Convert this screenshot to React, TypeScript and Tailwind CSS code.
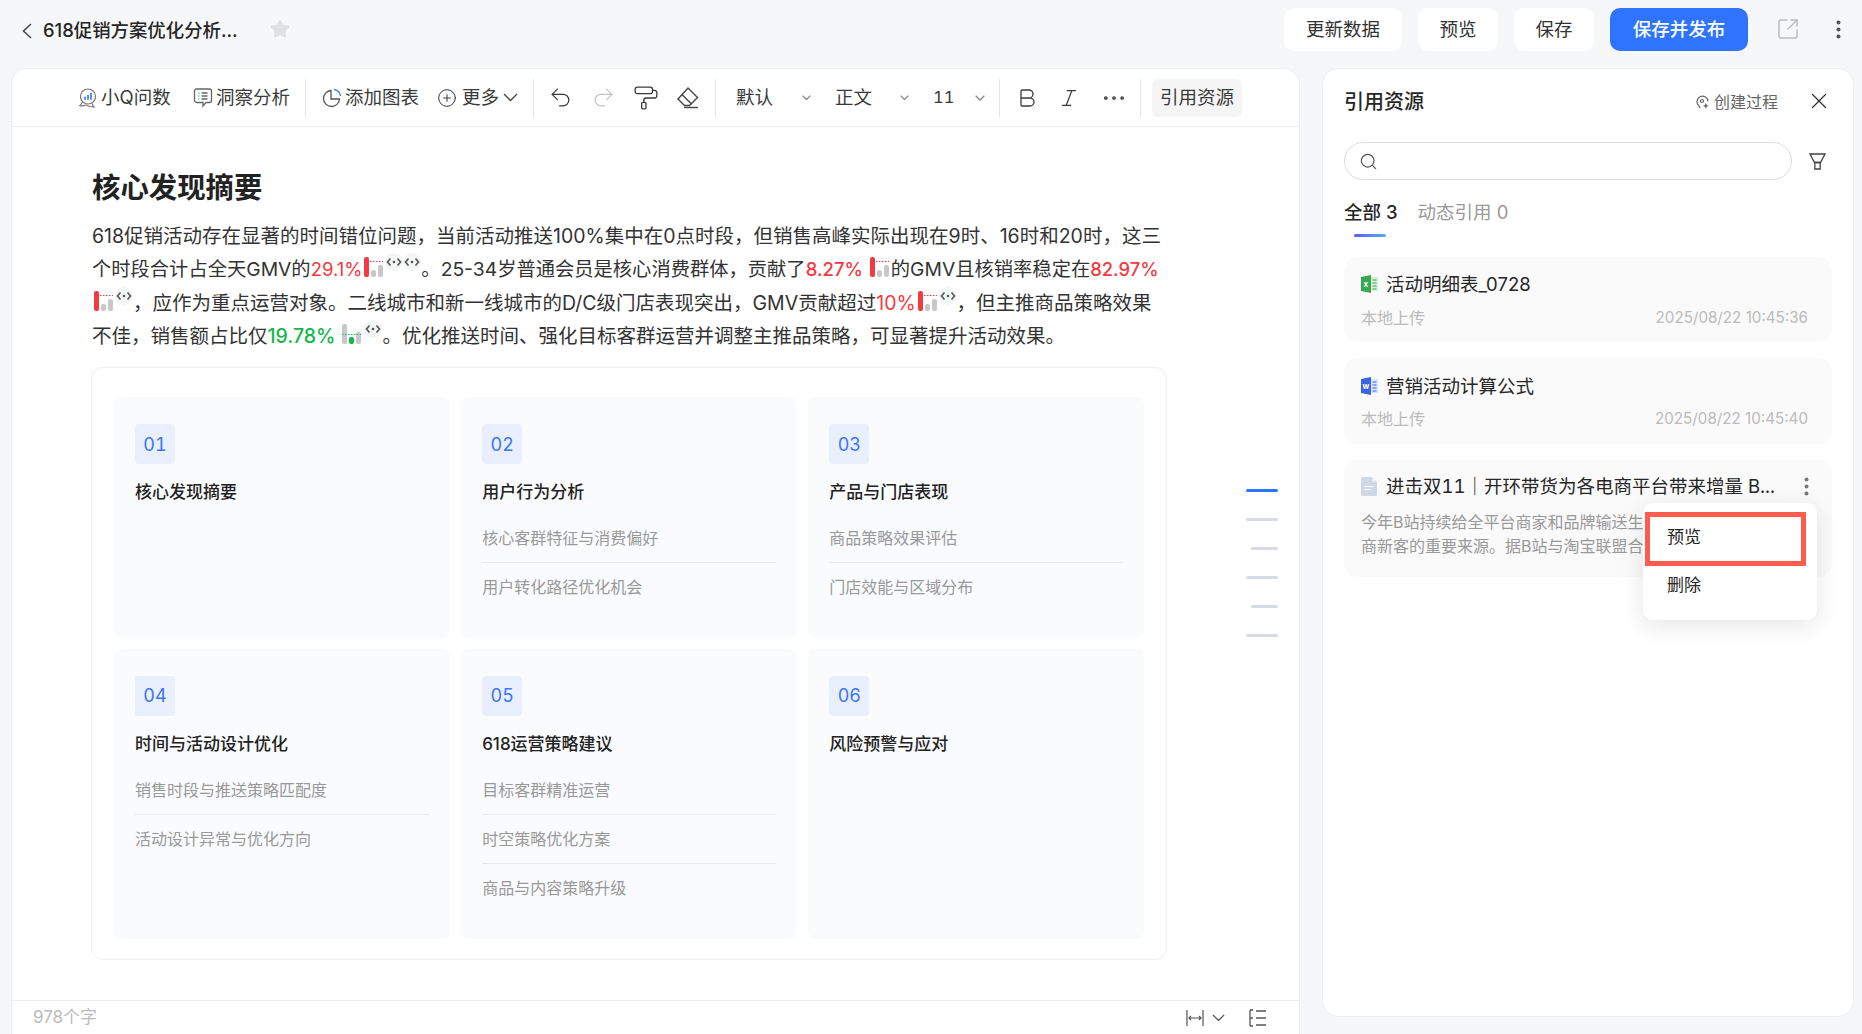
import { CirclePlus, ChevronDown, Star, Undo2, Redo2, PaintRoller, Bold, Italic, Ellipsis, Search, X, SquareArrowOutUpRight } from "lucide-react";

function Divider({ className }: { className: string }) {
  return <div className={`w-px h-[38px] shrink-0 bg-[#e4e6ea] ${className}`} />;
}

function Chev({ w, color, className }: { w: number; color: string; className: string }) {
  return (
    <svg width={w} height={w * 0.6} viewBox="0 0 15 9" fill="none" stroke={color} strokeWidth="1.300" className={`shrink-0 ${className}`}>
      <path d="M1 1l6.500 6.500L14 1" vectorEffect="non-scaling-stroke" />
    </svg>
  );
}

function QaIcon() {
  return (
    <svg width="20" height="22" viewBox="0 0 20 22" fill="none" stroke="#777" strokeWidth="1.200" className="shrink-0">
      <circle cx="10" cy="9.500" r="7.500" />
      <path d="M4 15c-.3 2 -1 3 -2 3.600 2 .6 4 .3 5.500-.8" />
      <path d="M8 18c2.500 1.700 5 2 8 2-1-1-1.500-1.800-1.500-3.500" />
      <path d="M7 12V10.500M10 12V8.500M13 12V6.500" stroke="#4a80f0" strokeWidth="1.800" strokeLinecap="round" />
    </svg>
  );
}

function InsightIcon({ className }: { className: string }) {
  return (
    <svg width="20" height="21" viewBox="0 0 20 21" fill="none" stroke="#666" strokeWidth="1.300" className={`shrink-0 ${className}`}>
      <path d="M3.500 2h13a2 2 0 0 1 2 2v9.500a2 2 0 0 1-2 2h-3.500l-3 3.500v-3.500h-6.500a2 2 0 0 1-2-2V4a2 2 0 0 1 2-2z" />
      <path d="M8.500 6h6M8.500 9h6M8.500 12h6" />
      <path d="M5.500 6h.8M5.500 9h.8M5.500 12h.8" stroke="#3b76f6" strokeWidth="1.500" />
    </svg>
  );
}

function PieIcon({ className }: { className: string }) {
  return (
    <svg width="20" height="20" viewBox="0 0 20 20" fill="none" stroke="#555" strokeWidth="1.300" className={`shrink-0 ${className}`}>
      <path d="M9 2.500a8 8 0 1 0 8.500 8.500H9z" />
      <path d="M12 1.500a7 7 0 0 1 6.500 6.500" stroke="#3b76f6" />
    </svg>
  );
}

function EraserIcon({ className }: { className: string }) {
  return (
    <svg width="23" height="24" viewBox="0 0 23 24" fill="none" stroke="#444" strokeWidth="1.400" className={`shrink-0 ${className}`}>
      <path d="M12 2l9.500 9.500-8 8H8.500L2 13z" />
      <path d="M6 8.500l9.500 9.500" />
      <path d="M8 21.500h14" />
    </svg>
  );
}

function FilterIcon() {
  return (
    <svg width="17" height="17" viewBox="0 0 17 17" fill="none" stroke="#444" strokeWidth="1.300">
      <path d="M1 1h15l-4.500 8.500H5.500z" />
      <path d="M5.800 9.500h5.400V16H5.800z" />
    </svg>
  );
}

function ProcessIcon() {
  return (
    <svg width="14" height="15" viewBox="0 0 14 15" fill="none" stroke="#666" strokeWidth="1.200">
      <path d="M4 13c0-1-.3-1.600-1.400-2.500A5.500 5.500 0 1 1 12 6.500" />
      <path d="M9.800 8l.9 2 2 .8-2 .9-.9 2-.9-2-2-.9 2-.8z" fill="#666" stroke="none" />
      <circle cx="6" cy="6" r="1.500" />
    </svg>
  );
}

function ExcelIcon() {
  return (
    <svg width="17" height="18" viewBox="0 0 17 18" className="shrink-0">
      <path d="M0 2l10-2v18L0 16z" fill="#36a852" />
      <path d="M10 2h7v14h-7z" fill="#d8efdc" />
      <path d="M11.500 5h4M11.500 8h4M11.500 11h4M11.500 14h4" stroke="#36a852" strokeWidth="1" />
      <text x="2.400" y="12" fontSize="8" fontWeight="700" fill="#fff" fontFamily="Inter">x</text>
    </svg>
  );
}

function WordIcon() {
  return (
    <svg width="17" height="18" viewBox="0 0 17 18" className="shrink-0">
      <path d="M0 2l10-2v18L0 16z" fill="#3a63e6" />
      <path d="M10 2h7v14h-7z" fill="#dde4fb" />
      <path d="M11.500 5h4M11.500 8h4M11.500 11h4M11.500 14h4" stroke="#3a63e6" strokeWidth="1" />
      <text x="1.600" y="12" fontSize="8" fontWeight="700" fill="#fff" fontFamily="Inter">w</text>
    </svg>
  );
}

function DocIcon() {
  return (
    <svg width="16" height="19" viewBox="0 0 16 19" className="shrink-0">
      <path d="M1.500 0H11l5 5v12.500a1.500 1.500 0 0 1-1.500 1.500h-13A1.500 1.500 0 0 1 0 17.500v-16A1.500 1.500 0 0 1 1.500 0z" fill="#cfd8e6" />
      <path d="M11 0l5 5h-5z" fill="#e6ebf3" />
      <path d="M3.500 9.500h9M3.500 12.500h6" stroke="#fff" strokeWidth="1.200" />
    </svg>
  );
}

function Dots({ color }: { color: string }) {
  return (
    <svg width="5" height="19" viewBox="0 0 5 19" fill={color} className="shrink-0">
      <circle cx="2.500" cy="2.500" r="2" />
      <circle cx="2.500" cy="9.500" r="2" />
      <circle cx="2.500" cy="16.500" r="2" />
    </svg>
  );
}

function RedBars({ className = "mx-[2px]" }: { className?: string }) {
  return (
    <svg width="19" height="20" viewBox="0 0 19 20" className={`inline-block -my-2 align-[7px] ${className}`}>
      <rect x="0" y="0" width="5" height="20" rx="2" fill="#f5393f" />
      <rect x="7" y="13" width="5" height="7" rx="2" fill="#c8c8c8" />
      <rect x="14" y="8" width="5" height="12" rx="2" fill="#c8c8c8" />
      <path d="M6 4.500h13" stroke="#f5393f" strokeWidth="1.200" strokeDasharray="1.500 1.500" />
    </svg>
  );
}

function GreenBars() {
  return (
    <svg width="19" height="20" viewBox="0 0 19 20" className="inline-block -my-2 ml-[7px] mr-[3px] align-[7px]">
      <rect x="0" y="0" width="5" height="20" rx="2" fill="#c8c8c8" />
      <rect x="7" y="13" width="5" height="7" rx="2" fill="#12b84a" />
      <rect x="14" y="8" width="5" height="12" rx="2" fill="#c8c8c8" />
      <path d="M0 10.500h19" stroke="#12b84a" strokeWidth="1.200" strokeDasharray="1.500 1.500" />
    </svg>
  );
}

function CodeChip() {
  return (
    <svg width="18" height="18" viewBox="0 0 18 18" className="inline-block -my-2 align-[13px]">
      <circle cx="9" cy="9" r="9" fill="#f1f5f3" />
      <path d="M5.500 5.500L2.500 9l3 3.500M12.500 5.500l3 3.500-3 3.500" fill="none" stroke="#555" strokeWidth="1.600" />
      <circle cx="9" cy="9" r="1.300" fill="#555" />
    </svg>
  );
}

const cards = [
  { no: "01", title: "核心发现摘要", items: [] as string[] },
  { no: "02", title: "用户行为分析", items: ["核心客群特征与消费偏好", "用户转化路径优化机会"] },
  { no: "03", title: "产品与门店表现", items: ["商品策略效果评估", "门店效能与区域分布"] },
  { no: "04", title: "时间与活动设计优化", items: ["销售时段与推送策略匹配度", "活动设计异常与优化方向"] },
  { no: "05", title: "618运营策略建议", items: ["目标客群精准运营", "时空策略优化方案", "商品与内容策略升级"] },
  { no: "06", title: "风险预警与应对", items: [] as string[] },
];

function TocCard({ no, title, items }: { no: string; title: string; items: string[] }) {
  return (
    <div className="bg-[#fafbfd] rounded-lg pt-[27px] px-[21px] pb-[27px]">
      <div className="w-10 h-10 rounded bg-[#e9effd] text-[#3b76f6] text-[18px] tabular-nums flex items-center justify-center">{no}</div>
      <div className="mt-4 text-[17px] leading-6 font-medium text-[#222]">{title}</div>
      <div className="mt-[10px]">
        {items.map((it) => (
          <div key={it} className="py-3 text-[16px] leading-6 text-[#999] border-b border-[#e8eaee] last:border-b-0">
            {it}
          </div>
        ))}
      </div>
    </div>
  );
}

export default function App() {
  return (
    <div lang="zh-CN" className="h-[1034px] overflow-hidden bg-[#f6f7f9] text-[#333] font-[Inter,'Noto_Sans_CJK_SC',sans-serif]">
      {/* top bar */}
      <div className="h-[68px] flex items-start">
        <svg width="12" height="16" viewBox="0 0 12 16" fill="none" stroke="#444" strokeWidth="1.500" className="ml-[21px] mt-[23px]">
          <path d="M10 1L2.500 8l7.500 7" />
        </svg>
        <div className="ml-[10px] mt-[17px] text-[18.400px] leading-[26px] font-medium text-[#262626]">618促销方案优化分析...</div>
        <Star size={20} fill="#dfe1e5" stroke="#dfe1e5" className="ml-[32px] mt-[19px]" />
        <div className="ml-auto mt-2 flex items-center gap-4 text-[18.500px]">
          <button className="h-[43px] w-[118px] rounded-[10px] bg-white">更新数据</button>
          <button className="h-[43px] w-20 rounded-[10px] bg-white">预览</button>
          <button className="h-[43px] w-20 rounded-[10px] bg-white">保存</button>
          <button className="h-[43px] w-[138px] rounded-[10px] bg-[#2f74ff] text-white font-medium">保存并发布</button>
        </div>
        <SquareArrowOutUpRight size={24} strokeWidth={1.500} color="#b9bcc2" className="ml-[28px] mt-[17px]" />
        <div className="ml-[36px] mr-[21px] mt-[20px]">
          <Dots color="#555" />
        </div>
      </div>

      <div className="flex items-start">
        {/* editor panel */}
        <div className="relative ml-[11px] w-[1289px] h-[966px] bg-white rounded-t-2xl border border-b-0 border-[#eceef1] flex flex-col">
          <div className="h-[58px] shrink-0 border-b border-[#eceef1] flex items-center pl-[66px] text-[18.500px] text-[#3a3a3a] whitespace-nowrap">
            <QaIcon />
            <span className="ml-[3px] w-[70px] shrink-0">小Q问数</span>
            <InsightIcon className="ml-[22px]" />
            <span className="ml-[3px] w-[74px] shrink-0">洞察分析</span>
            <Divider className="ml-[15px]" />
            <PieIcon className="ml-4" />
            <span className="ml-[3px] w-[75px] shrink-0">添加图表</span>
            <CirclePlus size={20} strokeWidth={1.200} className="ml-[17px] shrink-0" />
            <span className="ml-[5px] w-[37px] shrink-0">更多</span>
            <Chev w={15} color="#444" className="ml-1" />
            <Divider className="ml-[15px]" />
            <Undo2 size={25} strokeWidth={1.200} className="ml-[14px] shrink-0" />
            <Redo2 size={25} strokeWidth={1.200} color="#c4c4c4" className="ml-[18px] shrink-0" />
            <PaintRoller size={26} strokeWidth={1.200} className="ml-[17px] shrink-0" />
            <EraserIcon className="ml-[17px]" />
            <Divider className="ml-4" />
            <span className="ml-5 w-[37px] shrink-0">默认</span>
            <Chev w={9} color="#888" className="ml-[29px]" />
            <span className="ml-6 w-[37px] shrink-0">正文</span>
            <Chev w={9} color="#888" className="ml-[28px]" />
            <span className="ml-6 w-[17px] shrink-0 text-[16.500px] tabular-nums">11</span>
            <Chev w={10} color="#888" className="ml-[25px]" />
            <Divider className="ml-[14px]" />
            <Bold size={24} strokeWidth={1.300} className="ml-[15px] shrink-0" />
            <Italic size={22} strokeWidth={1.300} className="ml-[19px] shrink-0" />
            <Ellipsis size={28} strokeWidth={1.200} className="ml-5 shrink-0" />
            <Divider className="ml-3" />
            <div className="ml-[11px] h-[38px] w-[90px] shrink-0 rounded-md bg-[#f5f5f5] flex items-center justify-center">引用资源</div>
          </div>

          <div className="flex-1 pl-[80px] pt-[42px]">
            <h1 className="text-[28.400px] leading-[38px] font-semibold text-[#222]">核心发现摘要</h1>
            <p className="mt-[13px] text-[19.500px] leading-[33.300px] whitespace-nowrap text-[#333]">
              618促销活动存在显著的时间错位问题，当前活动推送100%集中在0点时段，但销售高峰实际出现在9时、16时和20时，这三
              <br />
              <span className="text-[19.300px]">
                个时段合计占全天GMV的<span className="text-[#f5393f] text-[18.500px]">29.1%</span>
                <RedBars />
                <CodeChip />
                <CodeChip />
                。25-34岁普通会员是核心消费群体，贡献了<span className="text-[#f5393f] font-medium text-[18.500px]">8.27%</span>
                <RedBars className="ml-[7px] mr-[2px]" />
                的GMV且核销率稳定在<span className="text-[#f5393f] font-medium text-[18.400px]">82.97%</span>
              </span>
              <br />
              <RedBars />
              <CodeChip />
              ，应作为重点运营对象。二线城市和新一线城市的D/C级门店表现突出，GMV贡献超过<span className="text-[#f5393f]">10%</span>
              <RedBars />
              <CodeChip />
              ，但主推商品策略效果
              <br />
              不佳，销售额占比仅<span className="text-[#12b84a] font-medium">19.78%</span>
              <GreenBars />
              <CodeChip />
              。优化推送时间、强化目标客群运营并调整主推品策略，可显著提升活动效果。
            </p>

            <div className="mt-[14px] -ml-px w-[1076px] rounded-xl border border-[#eeeff2] pt-[29px] px-[22px] pb-5 grid grid-cols-3 gap-x-[11.500px] gap-y-[10.500px]">
              {cards.map((c) => (
                <TocCard key={c.no} no={c.no} title={c.title} items={c.items} />
              ))}
            </div>
          </div>

          <div className="h-[34px] shrink-0 border-t border-[#eceef1] flex items-center pl-[21px] text-[17px] text-[#bbb]">
            <span>978个字</span>
            <svg width="18" height="16" viewBox="0 0 18 16" fill="none" stroke="#555" strokeWidth="1.200" className="ml-auto">
              <path d="M1 0v16M17 0v16M3 8h12M5 6L3 8l2 2M13 6l2 2-2 2" />
            </svg>
            <Chev w={13} color="#555" className="ml-2" />
            <svg width="18" height="18" viewBox="0 0 18 18" fill="none" stroke="#555" strokeWidth="1.300" className="ml-6 mr-[32px]">
              <path d="M1 1v16M1 1h3M1 17h3M1 9h3M7 2h10M7 9h10M7 16h10" />
            </svg>
          </div>

          {/* section minimap */}
          <div className="absolute left-[1234px] top-[420px] w-8 flex flex-col items-end gap-[26px]">
            <div className="h-[3px] w-8 rounded-sm bg-[#2f74ff]" />
            <div className="h-[3px] w-8 rounded-sm bg-[#d8dbe6]" />
            <div className="h-[3px] w-[27px] rounded-sm bg-[#d8dbe6]" />
            <div className="h-[3px] w-8 rounded-sm bg-[#d8dbe6]" />
            <div className="h-[3px] w-[27px] rounded-sm bg-[#d8dbe6]" />
            <div className="h-[3px] w-8 rounded-sm bg-[#d8dbe6]" />
          </div>
        </div>

        {/* references panel */}
        <div className="relative ml-[22px] w-[532px] h-[949px] bg-white rounded-2xl border border-[#eceef1] pt-[19px] px-[21px]">
          <div className="h-7 flex items-center">
            <span className="text-[20px] font-medium text-[#262626]">引用资源</span>
            <span className="ml-auto"><ProcessIcon /></span>
            <span className="ml-[4px] text-[16px] text-[#666]">创建过程</span>
            <X size={26} strokeWidth={1.100} color="#333" className="ml-[28px] -mt-[3px]" />
          </div>
          <div className="mt-[26px] flex items-center">
            <div className="w-[448px] h-[38px] rounded-full border border-[#dcdcdc] flex items-center pl-[14px]">
              <Search size={19} strokeWidth={1.500} color="#555" />
            </div>
            <span className="ml-[17px]"><FilterIcon /></span>
          </div>
          <div className="mt-5 flex text-[18.500px] leading-6">
            <span className="font-medium text-[#262626]">全部 3</span>
            <span className="ml-5 text-[#999]">动态引用 0</span>
          </div>
          <div className="mt-[10px] ml-[10px] h-[3px] w-8 rounded-sm bg-gradient-to-r from-[#5b5bf6] to-[#5aa9ff]" />

          <div className="mt-5 flex flex-col gap-4">
            <div className="h-[85px] rounded-[14px] bg-[#fafafa] pt-[15px] pl-[17px] pr-6">
              <div className="flex items-center gap-2 text-[18.500px] leading-6 text-[#262626]">
                <ExcelIcon />
                活动明细表_0728
              </div>
              <div className="mt-[10px] flex justify-between items-center text-[16px] leading-6 text-[#bbb]">
                <span>本地上传</span>
                <span className="text-[15.200px]">2025/08/22 10:45:36</span>
              </div>
            </div>
            <div className="h-[86px] rounded-[14px] bg-[#fafafa] pt-[16px] pl-[17px] pr-6">
              <div className="flex items-center gap-2 text-[18.500px] leading-6 text-[#262626]">
                <WordIcon />
                营销活动计算公式
              </div>
              <div className="mt-[9px] flex justify-between items-center text-[16px] leading-6 text-[#bbb]">
                <span>本地上传</span>
                <span className="text-[15.200px]">2025/08/22 10:45:40</span>
              </div>
            </div>
            <div className="h-[117px] rounded-[14px] bg-[#fafafa] pt-[14px] pl-[17px] pr-6">
              <div className="flex items-center text-[18.500px] leading-6 text-[#262626] tabular-nums">
                <DocIcon />
                <span className="ml-[9px] whitespace-nowrap">进击双11｜开环带货为各电商平台带来增量 B...</span>
                <span className="ml-auto -mr-[1px]"><Dots color="#777" /></span>
              </div>
              <div className="mt-3 text-[16px] leading-6 text-[#999] whitespace-nowrap">
                今年B站持续给全平台商家和品牌输送生
                <br />
                商新客的重要来源。据B站与淘宝联盟合
              </div>
            </div>
          </div>

          {/* item menu */}
          <div className="absolute left-[320px] top-[434px] w-[174px] h-[117px] rounded-[10px] bg-white shadow-[0_6px_24px_rgba(0,0,0,0.10)] text-[17px] text-[#262626]">
            <div className="absolute left-[2px] top-[9px] w-[161px] h-[54px] border-[5px] border-[#ff5c50]" />
            <div className="pl-[24px] pt-[22px] leading-6">预览</div>
            <div className="pl-[24px] pt-[24px] leading-6">删除</div>
          </div>
        </div>
      </div>
    </div>
  );
}
